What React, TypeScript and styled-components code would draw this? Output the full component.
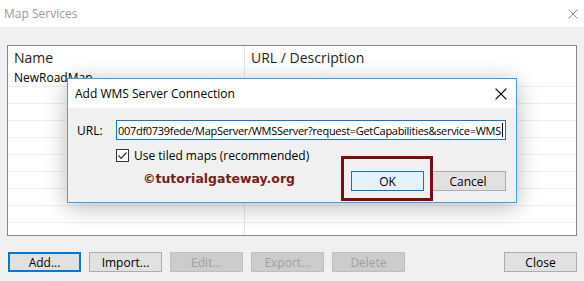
import React from 'react';
import styled, { createGlobalStyle } from 'styled-components';

const GlobalStyle = createGlobalStyle`
  html, body {
    margin: 0;
    padding: 0;
    background: #f0f0f0;
  }
  body {
    font-family: 'Open Sans', 'Noto Sans', sans-serif;
    font-size: 12px;
    color: #000;
  }
`;

const Window = styled.div`
  position: relative;
  width: 584px;
  height: 281px;
  overflow: hidden;
  display: flex;
  flex-direction: column;
  background: #f0f0f0;
`;

const TitleBar = styled.div`
  height: 27px;
  background: #fff;
  display: flex;
  align-items: center;
  justify-content: space-between;
  padding: 0 6px 0 4px;
  color: #999;
  flex-shrink: 0;
`;

const Body = styled.div`
  display: flex;
  flex-direction: column;
  padding: 18px 7px 0 7px;
`;

const ListBox = styled.div`
  height: 189px;
  border: 1px solid #828790;
  background: #fff;
  overflow: hidden;
`;

const ListRow = styled.div<{ $header?: boolean }>`
  display: grid;
  grid-template-columns: 236px 1fr;
  height: ${p => (p.$header ? '23px' : '16px')};
  border-bottom: 1px solid ${p => (p.$header ? 'transparent' : '#f0f0f0')};
  font-size: ${p => (p.$header ? '14px' : '12px')};
  color: ${p => (p.$header ? '#1e1e1e' : '#000')};
`;

const Cell = styled.div<{ $header?: boolean }>`
  display: flex;
  align-items: ${p => (p.$header ? 'center' : 'flex-end')};
  padding-left: 6px;
  white-space: nowrap;
  overflow: hidden;
  & + & {
    border-left: 1px solid #e5e5e5;
  }
`;

const ButtonRow = styled.div`
  display: flex;
  gap: 8px;
  margin-top: 16px;
  padding-left: 1px;
`;

type Variant = 'normal' | 'focused' | 'disabled' | 'primary';

const Button = styled.div<{ $variant?: Variant; $push?: boolean; $wide?: boolean }>`
  box-sizing: border-box;
  width: ${p => (p.$wide ? '76px' : '73px')};
  height: 20px;
  display: flex;
  align-items: center;
  justify-content: center;
  font-size: 12px;
  margin-left: ${p => (p.$push ? 'auto' : '0')};
  background: ${p =>
    p.$variant === 'disabled' ? '#cccccc' : p.$variant === 'primary' ? '#e5f1fb' : '#e1e1e1'};
  border: ${p =>
    p.$variant === 'focused'
      ? '2px solid #0078d7'
      : p.$variant === 'primary'
      ? '1px solid #0078d7'
      : p.$variant === 'disabled'
      ? '1px solid #bfbfbf'
      : '1px solid #adadad'};
  color: ${p => (p.$variant === 'disabled' ? '#a0a0a0' : '#000')};
`;

const Dialog = styled.div`
  position: absolute;
  left: 67px;
  top: 78px;
  width: 450px;
  height: 125px;
  box-sizing: border-box;
  border: 1px solid #42a0ea;
  background: #f0f0f0;
  box-shadow: 0 4px 22px rgba(0, 0, 0, 0.28);
  display: flex;
  flex-direction: column;
`;

const DialogTitle = styled.div`
  height: 29px;
  background: #fff;
  display: flex;
  align-items: center;
  justify-content: space-between;
  padding: 0 9px 0 7px;
  flex-shrink: 0;
`;

const DialogBody = styled.div`
  position: relative;
  flex: 1;
  display: flex;
  flex-direction: column;
  padding: 12px 10px 0 9px;
`;

const UrlRow = styled.div`
  display: flex;
  align-items: center;
`;

const UrlLabel = styled.span`
  width: 39px;
`;

const UrlInput = styled.div`
  box-sizing: border-box;
  width: 390px;
  height: 20px;
  border: 1px solid #0078d7;
  background: #fff;
  display: flex;
  align-items: center;
  overflow: hidden;
  white-space: nowrap;
  padding-left: 1px;
  font-size: 11px;
  letter-spacing: -0.3px;
`;

const Caret = styled.span`
  display: inline-block;
  width: 1px;
  height: 14px;
  background: #000;
  margin-left: 1px;
`;

const CheckRow = styled.label`
  display: flex;
  align-items: center;
  gap: 5px;
  margin: 7px 0 0 39px;
`;

const CheckBox = styled.span`
  box-sizing: border-box;
  width: 13px;
  height: 13px;
  border: 1px solid #333;
  background: #fff;
  display: flex;
  align-items: center;
  justify-content: center;
`;

const FooterRow = styled.div`
  display: flex;
  align-items: center;
  margin-top: 7px;
  padding-left: 66px;
  gap: 6px;
`;

const Watermark = styled.span`
  font-family: 'DejaVu Sans', 'Liberation Sans', sans-serif;
  font-weight: bold;
  font-size: 12.5px;
  color: #7a1c1c;
  margin-right: auto;
  margin-top: -6px;
`;

const Highlight = styled.div`
  position: absolute;
  left: 273px;
  top: 48px;
  width: 92px;
  height: 45px;
  box-sizing: border-box;
  border: 3px solid #7d0c12;
  pointer-events: none;
`;

const CloseX = ({ color, size }: { color: string; size: number }) => (
  <svg width={size} height={size} viewBox="0 0 10 10">
    <path d="M0.5 0.5 L9.5 9.5 M9.5 0.5 L0.5 9.5" stroke={color} strokeWidth="1" />
  </svg>
);

const rows = ['NewRoadMap', '', '', '', '', '', '', '', '', ''];

const App: React.FC = () => {
  return (
    <>
      <GlobalStyle />
      <Window>
        <TitleBar>
          <span>Map Services</span>
          <CloseX color="#8a8a8a" size={10} />
        </TitleBar>
        <Body>
          <ListBox>
            <ListRow $header>
              <Cell $header>Name</Cell>
              <Cell $header>URL / Description</Cell>
            </ListRow>
            {rows.map((name, i) => (
              <ListRow key={i}>
                <Cell>{name}</Cell>
                <Cell />
              </ListRow>
            ))}
          </ListBox>
          <ButtonRow>
            <Button $variant="focused">Add...</Button>
            <Button>Import...</Button>
            <Button $variant="disabled">Edit...</Button>
            <Button $variant="disabled">Export...</Button>
            <Button $variant="disabled">Delete</Button>
            <Button $push>Close</Button>
          </ButtonRow>
        </Body>

        <Dialog>
          <DialogTitle>
            <span>Add WMS Server Connection</span>
            <CloseX color="#000" size={12} />
          </DialogTitle>
          <DialogBody>
            <UrlRow>
              <UrlLabel>URL:</UrlLabel>
              <UrlInput>
                007df0739fede/MapServer/WMSServer?request=GetCapabilities&amp;service=WMS
                <Caret />
              </UrlInput>
            </UrlRow>
            <CheckRow>
              <CheckBox>
                <svg width="11" height="11" viewBox="0 0 11 11">
                  <path d="M1.5 5.5 L4.2 8.3 L9.5 2.5" fill="none" stroke="#333" strokeWidth="1.2" />
                </svg>
              </CheckBox>
              <span>Use tiled maps (recommended)</span>
            </CheckRow>
            <FooterRow>
              <Watermark>©tutorialgateway.org</Watermark>
              <Button $variant="primary">OK</Button>
              <Button $wide>Cancel</Button>
            </FooterRow>
            <Highlight />
          </DialogBody>
        </Dialog>
      </Window>
    </>
  );
};

export default App;
